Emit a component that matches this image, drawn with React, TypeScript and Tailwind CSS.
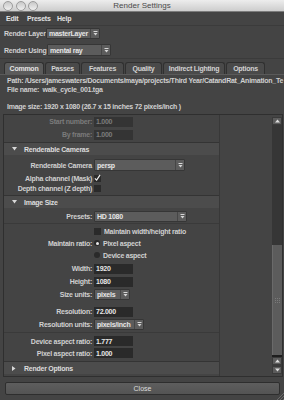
import React from "react";

const DropArrow = () => (
  <svg width="5" height="5" viewBox="0 0 5 5">
    <path d="M0.5 0.5H4.5" stroke="#d6d6d6" strokeWidth="1" />
    <path d="M0.5 2H4.5L2.5 4.5Z" fill="#d6d6d6" />
  </svg>
);

interface DropdownProps {
  value: string;
  className: string;
}

const Dropdown: React.FC<DropdownProps> = ({ value, className }) => (
  <div
    className={`flex items-stretch bg-[#5c5c5c] border border-[#363636] rounded-[1px] ${className}`}
  >
    <span className="flex-1 flex items-center pl-[2px] text-[#e6e6e6] whitespace-nowrap overflow-hidden">
      {value}
    </span>
    <span className="w-[9px] flex items-center justify-center border-l border-[#464646]">
      <DropArrow />
    </span>
  </div>
);

const Field: React.FC<{ value: string; dim?: boolean }> = ({ value, dim }) => (
  <div
    className={`w-[39px] h-[10px] flex items-center pl-[2px] ${
      dim ? "bg-[#343434] text-[#7c7c7c]" : "bg-[#2a2a2a] text-[#e8e8e8]"
    }`}
  >
    {value}
  </div>
);

interface RowProps {
  label?: string;
  h: string;
  dim?: boolean;
  children?: React.ReactNode;
}

const Row: React.FC<RowProps> = ({ label, h, dim, children }) => (
  <div className={`flex items-center ${h}`}>
    <span
      className={`w-[88px] shrink-0 text-right whitespace-nowrap ${
        dim ? "text-[#7b7b7b]" : "text-[#d0d0d0]"
      }`}
    >
      {label}
    </span>
    <div className="ml-[2px] flex items-center gap-[3px] whitespace-nowrap">
      {children}
    </div>
  </div>
);

const Header: React.FC<{ title: string; open?: boolean }> = ({ title, open }) => (
  <div className="h-[13px] border-t border-[#343434] bg-[#4c4c4c] flex items-center text-[#dcdcdc]">
    <span className="w-[20px] flex justify-center">
      {open ? (
        <svg width="5" height="4" viewBox="0 0 5 4">
          <path d="M0 0H5L2.5 3.5Z" fill="#d8d8d8" />
        </svg>
      ) : (
        <svg width="4" height="5" viewBox="0 0 4 5">
          <path d="M0 0V5L3.5 2.5Z" fill="#d8d8d8" />
        </svg>
      )}
    </span>
    <span>{title}</span>
  </div>
);

const CheckBox: React.FC<{ checked?: boolean }> = ({ checked }) => (
  <div className="w-[7px] h-[7px] bg-[#2a2a2a] flex items-center justify-center">
    {checked && (
      <svg width="8" height="8" viewBox="0 0 8 8">
        <path d="M1 4.5L3 6.5L7 0.5" stroke="#f2f2f2" strokeWidth="1.3" fill="none" />
      </svg>
    )}
  </div>
);

const Radio: React.FC<{ on?: boolean }> = ({ on }) => (
  <div className="w-[6px] h-[6px] rounded-full bg-[#2a2a2a] flex items-center justify-center">
    {on && <div className="w-[3px] h-[3px] rounded-full bg-[#e8e8e8]" />}
  </div>
);

const ScrollButton: React.FC<{ up?: boolean }> = ({ up }) => (
  <div className="h-[8px] bg-[#5c5c5c] border border-[#3a3a3a] flex items-center justify-center">
    <svg width="5" height="4" viewBox="0 0 5 4">
      {up ? (
        <path d="M0 3.5H5L2.5 0.5Z" fill="#dddddd" />
      ) : (
        <path d="M0 0.5H5L2.5 3.5Z" fill="#dddddd" />
      )}
    </svg>
  </div>
);

const tabs = [
  { name: "Common", w: "w-[40px]", active: true },
  { name: "Passes", w: "w-[35px]" },
  { name: "Features", w: "w-[43px]" },
  { name: "Quality", w: "w-[37px]" },
  { name: "Indirect Lighting", w: "w-[62px]" },
  { name: "Options", w: "w-[39px]" },
];

export default function App() {
  return (
    <div className="relative w-[284px] h-[400px] overflow-hidden bg-[#444444] font-['Liberation_Sans',Arial,sans-serif] text-[7px] font-bold tracking-[-0.25px] leading-none text-[#d0d0d0] select-none">
      {/* title bar */}
      <div className="h-[12px] flex items-center bg-gradient-to-b from-[#ededed] to-[#cdcdcd] border-b border-[#7c7c7c]">
        <div className="w-[42px] flex items-center gap-[2.5px] pl-[3px]">
          {[0, 1, 2].map((i) => (
            <div
              key={i}
              className="w-[10px] h-[10px] rounded-full border border-[#9c9c9c] bg-gradient-to-b from-[#c8c8c8] to-[#f0f0f0]"
            />
          ))}
        </div>
        <div className="flex-1 text-center font-normal text-[8px] tracking-normal text-[#4a4a4a]">
          Render Settings
        </div>
        <div className="w-[42px]" />
      </div>

      {/* menu bar */}
      <div className="h-[13px] flex items-center pl-[6px] text-[#e2e2e2]">
        <span className="w-[21px]">Edit</span>
        <span className="w-[30px]">Presets</span>
        <span>Help</span>
      </div>

      {/* render layer / renderer */}
      <div className="h-[34px] border-t border-b border-[#3b3b3b] pl-[4px] pt-[2px] flex flex-col">
        <div className="flex items-center h-[11px]">
          <span className="w-[42px] whitespace-nowrap">Render Layer</span>
          <Dropdown value="masterLayer" className="w-[54px] h-[11px]" />
        </div>
        <div className="flex items-center h-[12px] mt-[5px]">
          <span className="w-[43px] whitespace-nowrap">Render Using</span>
          <Dropdown value="mental ray" className="w-[64px] h-[12px]" />
        </div>
      </div>

      {/* tabs */}
      <div className="h-[12px] mt-[3px] flex items-end gap-[1px] pl-[4px]">
        {tabs.map((t) => (
          <div
            key={t.name}
            className={`${t.w} h-[12px] rounded-t-[3px] border border-b-0 border-[#303030] flex items-center justify-center whitespace-nowrap ${
              t.active ? "bg-[#5b5b5b] text-[#e4e4e4]" : "bg-[#4a4a4a] text-[#d2d2d2]"
            }`}
          >
            {t.name}
          </div>
        ))}
      </div>

      {/* panel */}
      <div className="border-t border-[#5a5a5a]">
        <div className="pl-[7px] pt-[1px] whitespace-nowrap overflow-hidden">
          <div className="h-[9px] flex items-center">
            Path: /Users/jameswaters/Documents/maya/projects/Third Year/CatandRat_Animation_Te
          </div>
          <div className="h-[9px] flex items-center">
            File name:&nbsp;&nbsp;walk_cycle_001.tga
          </div>
          <div className="h-[9px] flex items-center mt-[8px]">
            Image size: 1920 x 1080 (26.7 x 15 inches 72 pixels/inch )
          </div>
        </div>

        {/* scroll frame */}
        <div className="mt-[3px] ml-[3px] mr-[1px] h-[263px] border border-[#2f2f2f] flex">
          <div className="w-[216px] border-r border-[#383838] flex flex-col">
            <Row label="Start number:" h="h-[13px]" dim>
              <Field value="1.000" dim />
            </Row>
            <Row label="By frame:" h="h-[13px]" dim>
              <Field value="1.000" dim />
            </Row>
            <div className="h-[1px]" />
            <Header title="Renderable Cameras" open />
            <div className="pt-[3px] pb-[2px]">
              <Row label="Renderable Camera" h="h-[14px]">
                <Dropdown value="persp" className="w-[91px] h-[12px]" />
              </Row>
              <div className="mt-[1px]">
                <Row label="Alpha channel (Mask)" h="h-[10px]">
                  <CheckBox checked />
                </Row>
                <Row label="Depth channel (Z depth)" h="h-[10px]">
                  <CheckBox />
                </Row>
              </div>
            </div>
            <Header title="Image Size" open />
            <div className="pt-[2px]">
              <Row label="Presets:" h="h-[12px]">
                <Dropdown value="HD 1080" className="w-[93px] h-[11px]" />
              </Row>
              <div className="mt-[1px] border-t border-[#3a3a3a] pt-[1px]">
                <Row h="h-[12px]">
                  <CheckBox />
                  <span className="text-[#d0d0d0]">Maintain width/height ratio</span>
                </Row>
                <Row label="Maintain ratio:" h="h-[12px]">
                  <Radio on />
                  <span>Pixel aspect</span>
                </Row>
                <Row label="" h="h-[12px]">
                  <Radio />
                  <span>Device aspect</span>
                </Row>
              </div>
              <div className="mt-[1px]">
                <Row label="Width:" h="h-[13px]">
                  <Field value="1920" />
                </Row>
                <Row label="Height:" h="h-[13px]">
                  <Field value="1080" />
                </Row>
                <Row label="Size units:" h="h-[13px]">
                  <Dropdown value="pixels" className="w-[36px] h-[11px]" />
                </Row>
              </div>
              <div className="mt-[4px]">
                <Row label="Resolution:" h="h-[13px]">
                  <Field value="72.000" />
                </Row>
                <Row label="Resolution units:" h="h-[13px]">
                  <Dropdown value="pixels/inch" className="w-[50px] h-[11px]" />
                </Row>
              </div>
              <div className="mt-[1px] border-t border-[#3a3a3a] pt-[1px]">
                <div className="mt-[1px]">
                  <Row label="Device aspect ratio:" h="h-[12px]">
                    <Field value="1.777" />
                  </Row>
                  <Row label="Pixel aspect ratio:" h="h-[12px]">
                    <Field value="1.000" />
                  </Row>
                </div>
              </div>
            </div>
            <div className="h-[2px]" />
            <Header title="Render Options" />
          </div>
          <div className="flex-1" />
          {/* scrollbar */}
          <div className="w-[10px] flex flex-col bg-[#3a3a3a]">
            <div className="h-[2px] bg-[#444444]" />
            <ScrollButton up />
            <div className="h-[120px] bg-[#363636]" />
            <div className="h-[110px] bg-[#5c5c5c] border-l border-[#6a6a6a] flex items-center justify-center">
              <div className="grid grid-cols-3 gap-[1px]">
                {Array.from({ length: 9 }).map((_, i) => (
                  <div key={i} className="w-[1px] h-[1px] bg-[#7a7a7a]" />
                ))}
              </div>
            </div>
            <div className="h-[2px] bg-[#1e1e1e]" />
            <ScrollButton up />
            <div className="h-[1px] bg-[#3a3a3a]" />
            <ScrollButton />
            <div className="h-[2px] bg-[#444444]" />
          </div>
        </div>
      </div>

      {/* close */}
      <div className="mt-[5px] ml-[5px] w-[275px] h-[13px] bg-gradient-to-b from-[#5e5e5e] to-[#545454] border border-[#2e2e2e] rounded-[2px] flex items-center justify-center text-[#dedede] font-normal tracking-normal">
        Close
      </div>

      {/* resize grip */}
      <svg className="absolute right-0 bottom-0" width="8" height="8" viewBox="0 0 8 8">
        <path d="M8 1L1 8M8 4L4 8M8 7L7 8" stroke="#6a6a6a" strokeWidth="1" />
      </svg>
    </div>
  );
}
